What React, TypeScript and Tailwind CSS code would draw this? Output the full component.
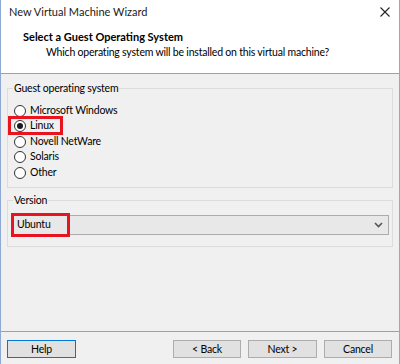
import React from "react";

function Radio({ label, checked }: { label: string; checked?: boolean }) {
  return (
    <div className="flex h-[15.5px] items-center">
      <span className="ml-[6px] flex h-[12px] w-[12px] items-center justify-center rounded-full border border-[#333333] bg-white">
        {checked && <span className="h-[6px] w-[6px] rounded-full bg-[#1a1a1a]" />}
      </span>
      <span className="ml-[4px]">{label}</span>
    </div>
  );
}

export default function App() {
  return (
    <div
      className="flex h-[364px] w-[400px] flex-col overflow-hidden border-x border-[#8fa9d6] text-[10.5px] tracking-[-0.2px] text-black"
      style={{ fontFamily: 'Lato, "Noto Sans", sans-serif' }}
    >
      {/* Header */}
      <div className="h-[73px] bg-white">
        <div className="flex h-[24px] items-center justify-between pl-[8px] pr-[9px]">
          <span className="text-[11px] tracking-normal text-[#1a1a1a]">New Virtual Machine Wizard</span>
          <svg width="10" height="10" viewBox="0 0 10 10" className="mt-[-1px]">
            <path d="M0.5 0.5 L9.5 9.5 M9.5 0.5 L0.5 9.5" stroke="#222" strokeWidth="1.1" />
          </svg>
        </div>
        <div className="mt-[5px] pl-[22px] text-[11px] font-bold leading-[16px] tracking-normal">Select a Guest Operating System</div>
        <div className="pl-[45px] leading-[14px]">Which operating system will be installed on this virtual machine?</div>
      </div>
      <div className="h-px bg-[#a0a0a0]" />

      {/* Body */}
      <div className="flex flex-1 flex-col bg-[#f0f0f0] px-[6px] pt-[7px]">
        <fieldset className="h-[107px] border border-[#dcdcdc] pl-[0px]">
          <legend className="ml-[5px] px-[1px] leading-[14px]">Guest operating system</legend>
          <div className="relative mt-[8px]">
            <Radio label="Microsoft Windows" />
            <Radio label="Linux" checked />
            <Radio label="Novell NetWare" />
            <Radio label="Solaris" />
            <Radio label="Other" />
            <div className="pointer-events-none absolute left-[0px] top-[13px] h-[19px] w-[55px] border-[3px] border-[#e8141f]" />
          </div>
        </fieldset>

        <fieldset className="mt-[5px] h-[54px] border border-[#dcdcdc]">
          <legend className="ml-[5px] px-[1px] leading-[14px]">Version</legend>
          <div className="relative mx-[3px] mt-[8px]">
            <div className="flex h-[20px] items-center justify-between border border-[#acacac] bg-[#e8e8e8] pl-[5px] pr-[5px]">
              <span>Ubuntu</span>
              <svg width="9" height="6" viewBox="0 0 9 6">
                <path d="M1 1 L4.5 4.5 L8 1" stroke="#555" strokeWidth="1.6" fill="none" />
              </svg>
            </div>
            <div className="pointer-events-none absolute left-[0px] top-[-2px] h-[24px] w-[59px] border-[3px] border-[#e8141f]" />
          </div>
        </fieldset>
      </div>

      {/* Footer */}
      <div className="h-px bg-[#a0a0a0]" />
      <div className="flex h-[32px] items-start bg-[#f0f0f0] pl-[6px] pr-[7px] pt-[8px]">
        <button className="h-[18px] w-[69px] border border-[#0078d7] bg-[#e1e1e1] leading-[16px]">Help</button>
        <div className="flex-1" />
        <button className="h-[18px] w-[68px] border border-[#adadad] bg-[#e1e1e1] leading-[16px]">&lt; Back</button>
        <button className="ml-[7px] h-[18px] w-[69px] border border-[#adadad] bg-[#e1e1e1] leading-[16px]">Next &gt;</button>
        <button className="ml-[7px] h-[18px] w-[68px] border border-[#adadad] bg-[#e1e1e1] leading-[16px]">Cancel</button>
      </div>
    </div>
  );
}
